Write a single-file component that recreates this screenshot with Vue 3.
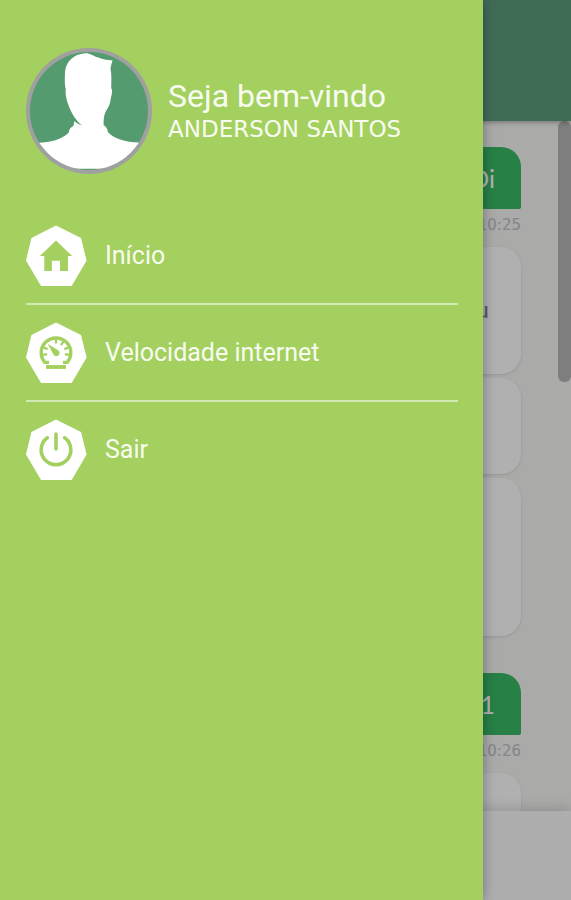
<script setup>
const user = 'ANDERSON SANTOS'

const menu = [
  { id: 'home', label: 'Início' },
  { id: 'speed', label: 'Velocidade internet' },
  { id: 'exit', label: 'Sair' },
]

const ticks = [-100, -68, 0, 34, 68, 100]
</script>

<template>
  <div class="app">
    <header class="topbar"></header>
    <main class="chat">
      <div class="bubble">Oi</div>
      <time class="time">10:25</time>
      <div class="card card-medium">u</div>
      <div class="card card-small"></div>
      <div class="card card-large"></div>
      <div class="bubble">1</div>
      <time class="time">10:26</time>
      <div class="card card-medium"></div>
      <span class="thumb"></span>
    </main>
    <footer class="composer"></footer>

    <div class="scrim"></div>

    <aside class="drawer">
      <div class="profile">
        <svg class="avatar" viewBox="78 54 380 380" aria-hidden="true">
          <defs>
            <clipPath id="face"><circle cx="268" cy="244" r="178" /></clipPath>
          </defs>
          <circle cx="268" cy="244" r="190" fill="#a0a0a0" />
          <g clip-path="url(#face)">
            <rect x="78" y="54" width="380" height="380" fill="#559b70" />
            <path
              fill="#fff"
              d="M256 70 C270 69 280 78 296 83 C312 89 326 92 339 91 C337 101 333 109 333 117 C337 135 335 156 335 176 C340 180 337 192 334 205 C332 220 329 231 321 241 C314 252 312 265 312 286 C321 291 324 300 325 307 C340 325 377 338 420 339 L420 418 L116 418 L116 340 C150 338 187 331 207 309 C208 300 211 293 221 289 L224 274 C231 281 238 285 247 288 C229 274 214 249 206 226 C200 211 196 190 198 178 C194 163 195 139 196 124 C199 95 222 73 256 70Z"
            />
          </g>
        </svg>
        <div class="welcome">
          <p class="greeting">Seja bem-vindo</p>
          <p class="name">{{ user }}</p>
        </div>
      </div>

      <nav class="menu">
        <a v-for="item in menu" :key="item.id" class="item" :href="'#' + item.id">
          <svg class="icon" viewBox="1 0 61 61" aria-hidden="true">
            <path fill="#fff" d="M31 .5 56 13 61.6 35.5 46.7 61H16L1 35.5 6.4 13Z" />
            <path
              v-if="item.id === 'home'"
              fill="#a3d05f"
              d="M31 15.5 47.2 31H43V46H35V35.7H26.8V46H19.3V31H14.8Z"
            />
            <g v-else-if="item.id === 'speed'" fill="none" stroke="#a3d05f">
              <path stroke-width="3.4" d="M24 40.4H19.8A14.8 14.8 0 1 1 42.2 40.4H38" />
              <path
                v-for="angle in ticks"
                :key="angle"
                stroke-width="2.2"
                d="M31 17V21.5"
                :transform="`rotate(${angle} 31 30.5)`"
              />
              <path fill="#a3d05f" stroke="none" d="M22.6 21.8 33.4 28.6A3.2 3.2 0 1 1 28.8 33Z" />
              <path stroke-width="3.8" d="M21 45H41" />
            </g>
            <g v-else fill="none" stroke="#a3d05f" stroke-width="3.6" stroke-linecap="round">
              <path d="M22.4 18.8A14.8 14.8 0 1 0 39.6 18.8" />
              <path d="M31 15V30" />
            </g>
          </svg>
          <span>{{ item.label }}</span>
        </a>
      </nav>
    </aside>
  </div>
</template>

<style>
body {
  margin: 0;
}
</style>

<style scoped>
.app {
  position: relative;
  display: flex;
  flex-direction: column;
  height: 100vh;
  overflow: hidden;
  font-family: Roboto, sans-serif;
}

.topbar {
  flex: none;
  height: 121px;
  background: #569172;
  box-shadow: 0 1px 5px rgba(0, 0, 0, 0.35);
  z-index: 1;
}

.chat {
  position: relative;
  flex: 1;
  min-height: 0;
  display: flex;
  flex-direction: column;
  padding: 26px 50px 0 26px;
  background: #e3e3e1;
  font-family: Lato, sans-serif;
  overflow: hidden;
}

.bubble {
  flex: none;
  align-self: flex-end;
  padding: 0 26px;
  border-radius: 20px 20px 2px 20px;
  background: #35ab5c;
  color: #eee;
  font-size: 25px;
  line-height: 62px;
}

.time {
  flex: none;
  align-self: flex-end;
  margin: 4px 0 10px;
  color: #afb2b6;
  font-family: "DejaVu Sans", sans-serif;
  font-size: 15px;
  line-height: 24px;
}

.card {
  flex: none;
  box-sizing: border-box;
  margin-bottom: 4px;
  padding: 0 32px;
  border-radius: 20px;
  background: #ebebeb;
  box-shadow: 0 1px 3px rgba(0, 0, 0, 0.12);
  color: #70777c;
  font-size: 24px;
  line-height: 123px;
  text-align: right;
}

.card-medium {
  height: 127px;
}

.card-small {
  height: 96px;
}

.card-large {
  height: 158px;
  margin-bottom: 37px;
}

.thumb {
  position: absolute;
  top: 0;
  right: 0;
  width: 13px;
  height: 261px;
  border-radius: 6px;
  background: #a8a8a8;
}

.composer {
  flex: none;
  height: 89px;
  background: #e8e8e8;
  box-shadow: 0 -2px 12px rgba(0, 0, 0, 0.16);
  z-index: 1;
}

.scrim {
  position: absolute;
  inset: 0;
  z-index: 2;
  background: rgba(0, 0, 0, 0.25);
}

.drawer {
  position: absolute;
  inset: 0 auto 0 0;
  z-index: 3;
  box-sizing: border-box;
  width: 84.6%;
  padding: 48px 25px 0 26px;
  background: #a3d05f;
  box-shadow: 0 0 12px rgba(0, 0, 40, 0.35);
  color: #f8fcf0;
}

.profile {
  display: flex;
  align-items: center;
  gap: 16px;
}

.avatar {
  flex: none;
  width: 126px;
  height: 126px;
}

.greeting,
.name {
  margin: 0;
  white-space: nowrap;
}

.greeting {
  font-size: 32px;
  line-height: 36px;
}

.name {
  font-family: "DejaVu Sans", sans-serif;
  font-size: 23px;
  line-height: 30px;
}

.menu {
  display: flex;
  flex-direction: column;
  margin-top: 34px;
}

.item {
  display: flex;
  align-items: center;
  gap: 18px;
  padding: 17px 0;
  border-bottom: 2px solid #d3e9b4;
  color: #f8fcf0;
  font-size: 25px;
  line-height: 30px;
  text-decoration: none;
}

.item:last-child {
  border-bottom: 0;
}

.icon {
  flex: none;
  width: 61px;
  height: 61px;
}
</style>
